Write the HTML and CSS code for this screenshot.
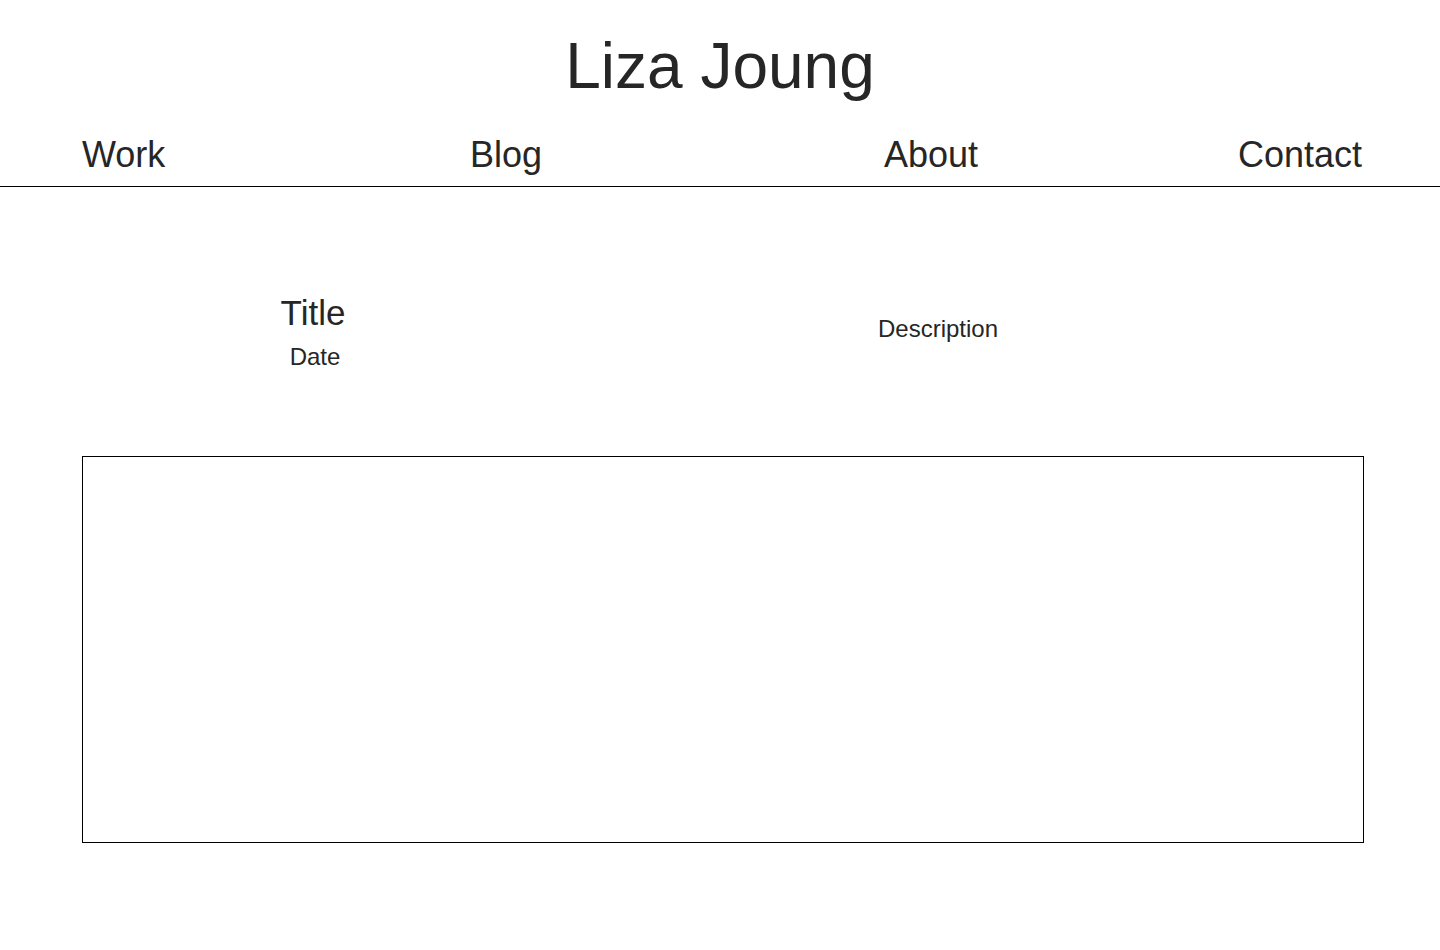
FILE: index.html
```html
<!DOCTYPE html>
<html lang="en">
<head>
<meta charset="utf-8">
<title>Liza Joung</title>
<link rel="stylesheet" href="styles.css">
</head>
<body>
<header class="site-header">
  <h1 class="site-title">Liza Joung</h1>
  <nav class="site-nav">
    <a class="nav-link" href="#">Work</a>
    <a class="nav-link" href="#">Blog</a>
    <a class="nav-link" href="#">About</a>
    <a class="nav-link" href="#">Contact</a>
  </nav>
</header>
<main class="content">
  <section class="post-intro">
    <div class="post-meta">
      <h2 class="post-title">Title</h2>
      <p class="post-date">Date</p>
    </div>
    <p class="post-desc">Description</p>
  </section>
  <div class="post-frame"></div>
</main>
</body>
</html>
```
FILE: styles.css
```css
* { box-sizing: border-box; }
html, body { margin: 0; padding: 0; background: #fff; }
body {
  font-family: "Liberation Sans", Arial, Helvetica, sans-serif;
  color: #262626;
}
.site-header {
  padding-top: 29px;
  border-bottom: 1px solid #000;
}
.site-title {
  margin: 0;
  font-size: 64px;
  line-height: 74px;
  font-weight: 400;
  text-align: center;
}
.site-nav {
  display: grid;
  grid-template-columns: 388px 414px 1fr auto;
  margin-top: 32px;
  padding: 0 78px 11px 82px;
}
.nav-link {
  font-size: 36px;
  line-height: 40px;
  color: #262626;
  text-decoration: none;
}
.content {
  padding-top: 106px;
  padding-bottom: 60px;
}
.post-intro {
  display: grid;
  grid-template-columns: 464px 784px;
  align-items: center;
  padding-left: 82px;
}
.post-meta {
  display: flex;
  flex-direction: column;
  align-items: center;
}
.post-title {
  margin: 0 2px 0 0;
  font-size: 35px;
  line-height: 40px;
  font-weight: 400;
}
.post-date {
  margin: 10px 0 0 2px;
  font-size: 24px;
  line-height: 28px;
}
.post-desc {
  margin: 0;
  padding-bottom: 6px;
  font-size: 24px;
  line-height: 28px;
  text-align: center;
}
.post-frame {
  margin: 85px 0 0 82px;
  width: 1282px;
  height: 387px;
  border: 1px solid #000;
}
```
